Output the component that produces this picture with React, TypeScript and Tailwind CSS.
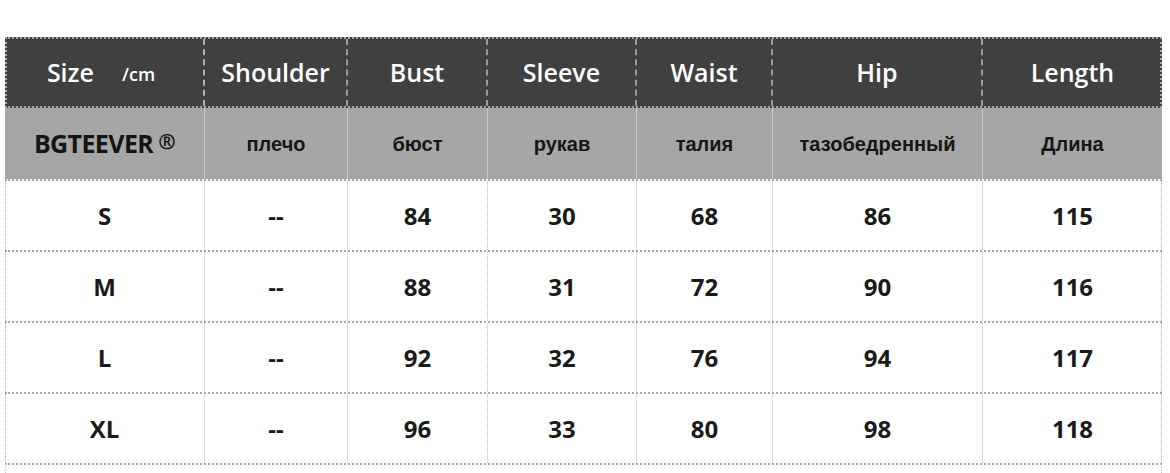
const cols = ['w-[200px]', 'w-[143px]', 'w-[140px]', 'w-[149px]', 'w-[136px]', 'w-[210px]', 'w-[179px]'];

const ru = ['плечо', 'бюст', 'рукав', 'талия', 'тазобедренный', 'Длина'];
const head = ['Shoulder', 'Bust', 'Sleeve', 'Waist', 'Hip', 'Length'];

const rows = [
  ['S', '--', '84', '30', '68', '86', '115'],
  ['M', '--', '88', '31', '72', '90', '116'],
  ['L', '--', '92', '32', '76', '94', '117'],
  ['XL', '--', '96', '33', '80', '98', '118'],
];

const sans = { fontFamily: '"Open Sans", "Noto Sans", sans-serif' };

export default function App() {
  return (
    <div className="w-[1170px] h-[473px] overflow-hidden bg-white pt-[37px] pl-[5px]" style={sans}>
      <div className="w-[1157px]">
        {/* header */}
        <div className="flex h-[71px] bg-[#404040] border-2 border-dotted border-[#a8a8a8]">
          <div className={`${cols[0]} -ml-[2px] flex items-center justify-center gap-[28px] pr-[6px] border-r-2 border-dashed border-[#b0b0b0] text-white font-semibold`}>
            <span className="text-[25px]">Size</span>
            <span className="text-[18px] mt-[4px]">/cm</span>
          </div>
          {head.map((h, i) => (
            <div
              key={h}
              className={`${cols[i + 1]} flex items-center justify-center text-white font-semibold text-[25px] ${i < 5 ? 'border-r-2 border-dashed border-[#9a9a9a]' : '-mr-[2px]'}`}
            >
              {h}
            </div>
          ))}
        </div>

        {/* russian labels */}
        <div className="flex h-[71px] bg-[#a6a6a6]">
          <div className={`${cols[0]} flex items-center justify-center border-r border-[#c8c8c8] text-[#141414] font-bold text-[25px] tracking-[-0.6px]`}>
            BGTEEVER<span className="ml-[5px] text-[21px] -mt-[4px]">®</span>
          </div>
          {ru.map((t, i) => (
            <div
              key={t}
              className={`${cols[i + 1]} flex items-center justify-center text-[#161616] font-bold text-[20px] ${i < 5 ? 'border-r border-[#c8c8c8]' : ''}`}
              style={{ fontFamily: '"Liberation Sans", Arial, sans-serif' }}
            >
              {t}
            </div>
          ))}
        </div>

        {/* sizes */}
        {rows.map((r) => (
          <div key={r[0]} className="flex h-[71px] border-t-2 border-dotted border-[#a8a8a8] border-l border-r">
            {r.map((v, i) => (
              <div
                key={i}
                className={`${cols[i]} ${i === 0 ? '-ml-px' : ''} ${i === 6 ? '-mr-px' : ''} flex items-center justify-center text-[#1a1a1a] font-bold text-[24px] ${i < 6 ? 'border-r border-dotted border-[#bcbcbc]' : ''}`}
              >
                {v}
              </div>
            ))}
          </div>
        ))}
        <div className="h-[20px] border-t-2 border-dotted border-[#a8a8a8] border-l border-r border-l-[#c4c4c4] border-r-[#c4c4c4]" />
      </div>
    </div>
  );
}
